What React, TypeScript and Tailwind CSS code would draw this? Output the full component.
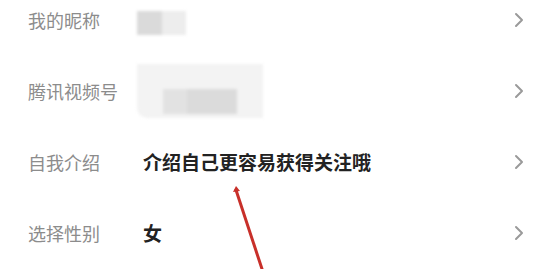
import React from "react";

const Chevron = () => (
  <svg width="12" height="18" viewBox="0 0 12 18" className="shrink-0">
    <path d="M3 3 L9 9 L3 15" fill="none" stroke="#9a9a9a" strokeWidth="2" strokeLinecap="round" strokeLinejoin="round" />
  </svg>
);

const Row = ({ label, children }: { label: string; children?: React.ReactNode }) => (
  <div className="flex h-[71px] items-center pl-[28px] pr-[25px]">
    <div className="w-[109px] shrink-0 text-[18px] leading-none text-[#8c8c8c]">{label}</div>
    <div className="flex flex-1 items-center">{children}</div>
    <Chevron />
  </div>
);

export default function App() {
  return (
    <div
      className="relative h-[269px] w-[550px] overflow-hidden bg-white"
      style={{ fontFamily: '"Noto Sans CJK SC", "Noto Sans", sans-serif' }}
    >
      <div className="-mt-[16px] flex flex-col">
        <Row label="我的昵称">
          <div className="mt-[7px] flex h-[24px] blur-[1.5px]">
            <div className="w-[25px] bg-[#dadada]" />
            <div className="w-[24px] bg-[#ededed]" />
          </div>
        </Row>
        <Row label="腾讯视频号">
          <div className="flex h-[54px] w-[126px] flex-col rounded-bl-[10px] bg-[#f3f3f3] blur-[1.5px]">
            <div className="h-[25px]" />
            <div className="flex h-[25px]">
              <div className="w-[26px]" />
              <div className="w-[24px] bg-[#e2e2e2]" />
              <div className="w-[50px] bg-[#dbdbdb]" />
            </div>
          </div>
        </Row>
        <Row label="自我介绍">
          <div className="pl-[6px] text-[19px] font-bold leading-none text-[#222]">介绍自己更容易获得关注哦</div>
        </Row>
        <Row label="选择性别">
          <div className="pl-[6px] text-[19px] font-bold leading-none text-[#222]">女</div>
        </Row>
      </div>
      <svg className="pointer-events-none absolute left-0 top-0" width="550" height="269">
        <line x1="236" y1="190" x2="263" y2="272" stroke="#c8302a" strokeWidth="3" strokeLinecap="round" />
        <path d="M233 192 L236 186 L240 191 Z" fill="#c8302a" />
      </svg>
    </div>
  );
}
